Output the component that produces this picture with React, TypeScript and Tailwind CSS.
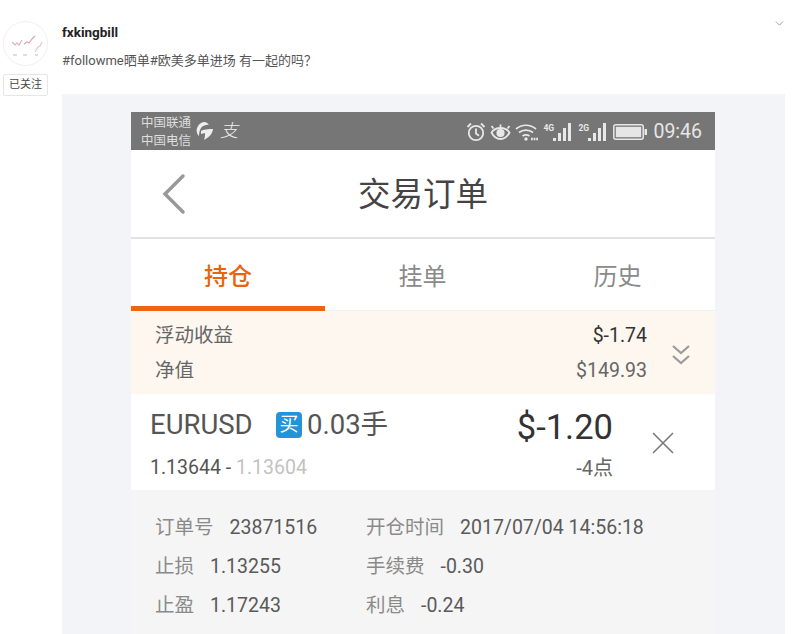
import { ChevronDown } from "lucide-react"

const FONT = "font-['Roboto','Noto_Sans_CJK_SC',sans-serif]"

function StatusIcons() {
  return (
    <div className="flex items-center gap-[4px]">
      {/* alarm */}
      <svg width="20" height="20" viewBox="0 0 20 20" fill="none" stroke="#e8e8e8" strokeWidth="1.800">
        <circle cx="10" cy="11" r="7.200" />
        <path d="M10 6.500v5l3 2.200M1.500 5l3.500-3.500M18.500 5 15 1.500" />
      </svg>
      {/* eye */}
      <svg width="21" height="20" viewBox="0 0 21 20" fill="none" stroke="#e8e8e8" strokeWidth="1.800">
        <path d="M1.500 10.500c2-3 5.200-4.500 9-4.500s7 1.500 9 4.500c-2 4-5.200 6.500-9 6.500s-7-2.500-9-6.500z" />
        <circle cx="10.500" cy="11" r="3.200" fill="#e8e8e8" />
        <path d="M3.500 6.500 1.500 4M17.500 6.500l2-2.500M10.500 5V2.500" />
      </svg>
      {/* wifi */}
      <svg width="24" height="20" viewBox="0 0 24 20" fill="none" stroke="#e8e8e8" strokeWidth="1.700">
        <path d="M1 7c5.800-5 14.200-5 20 0M4 10.500c4-3.200 10-3.200 14 0M7.500 14c2.200-1.500 4.800-1.500 7 0" />
        <circle cx="11" cy="17" r="1.700" fill="#e8e8e8" stroke="none" />
        <path d="M16 17h7" strokeWidth="2.500" strokeDasharray="1.800 0.800" />
      </svg>
      <Signal label="4G" />
      <Signal label="2G" />
      {/* battery */}
      <svg width="34" height="18" viewBox="0 0 34 18">
        <rect x="0.800" y="1.800" width="29.400" height="14.400" rx="2" fill="none" stroke="#e8e8e8" strokeWidth="1.500" />
        <rect x="2.800" y="3.800" width="25.400" height="10.400" fill="#e6e6e6" />
        <rect x="31.500" y="6" width="2.500" height="6" fill="#e8e8e8" />
      </svg>
    </div>
  )
}

function Signal({ label }: { label: string }) {
  return (
    <div className="relative w-[31px] h-[20px]">
      <span className="absolute left-0 top-[1px] text-[8.500px] font-bold leading-[10px] text-[#e8e8e8]">{label}</span>
      <svg width="31" height="20" viewBox="0 0 31 20" fill="#e8e8e8" className="absolute left-0 top-0">
        <rect x="10" y="16" width="3" height="3" />
        <rect x="15" y="11" width="3" height="8" />
        <rect x="20" y="6" width="3" height="13" />
        <rect x="25" y="1" width="3" height="18" />
      </svg>
    </div>
  )
}

function DetailRow({ a, b, c, d }: { a: string; b: string; c: string; d: string }) {
  return (
    <div className="flex h-[39px] items-center">
      <div className="w-[211px] flex gap-[16px]">
        <span className="text-[#8a8a8a]">{a}</span>
        <span className="text-[#5a5a5a]">{b}</span>
      </div>
      <div className="flex gap-[16px]">
        <span className="text-[#8a8a8a]">{c}</span>
        <span className="text-[#5a5a5a]">{d}</span>
      </div>
    </div>
  )
}

export default function App() {
  return (
    <div className={`flex h-[634px] w-[800px] overflow-hidden bg-white ${FONT}`}>
      {/* Avatar column */}
      <div className="w-[62px] shrink-0 pl-[3px] pt-[21px]">
        <div className="w-[45px] h-[45px] rounded-full border border-[#f0f0f0] bg-white flex items-center justify-center">
          <svg width="38" height="38" viewBox="0 0 38 38" fill="none" strokeWidth="1.200">
            <path d="M5 17l3 3 2-2 2 2 3-5" stroke="#dfb4ba" />
            <path d="M17 19l3-2 2 1 3-4 3-3" stroke="#dca6ae" />
            <path d="M28 27l3-5 2-1 2-4" stroke="#e8c4c4" />
            <path d="M6 30h4M16 30h4M28 30h3" stroke="#bdbdbd" />
          </svg>
        </div>
        <button className="mt-[8px] w-[45px] h-[22px] border border-[#e6e6e6] rounded-[2px] text-[11px] leading-[20px] text-[#444] bg-white">
          已关注
        </button>
      </div>

      {/* Post */}
      <div className="w-[723px] shrink-0 flex flex-col">
        <div className="h-[95px] relative pt-[24px]">
          <div className="text-[13.500px] leading-[16px] font-bold text-[#222]">fxkingbill</div>
          <div className="mt-[13px] text-[13px] leading-[16px] text-[#555]">#followme晒单#欧美多单进场 有一起的吗？</div>
          <ChevronDown className="absolute right-[-1px] top-[17px] text-[#777]" size={13} strokeWidth={1.300} />
        </div>

        <div className="flex-1 bg-[#f3f4f8] px-[69px] pt-[18px] pr-[70px]">
          <div className="w-[584px] bg-white">
            {/* Status bar */}
            <div className="h-[38px] bg-[#767676] flex items-center justify-between pl-[10px] pr-[13px]">
              <div className="flex items-center">
                <div className="pt-[2px] text-[12.500px] leading-[18px] text-[#dedede]">
                  <div>中国联通</div>
                  <div>中国电信</div>
                </div>
                <svg width="20" height="20" viewBox="0 0 20 20" className="ml-[4px]" fill="#eee">
                  <path d="M10 1a8.500 8.500 0 0 0-7 13l1 1c0-4 1-8 4-10 2-1 4-1.500 6-1.500A9 9 0 0 0 10 1zM6 10c2-1.500 7-2 12-2-.5 4-3 8-9 11 1-3 1-5 1-7l-4 1z" />
                </svg>
                <span className="ml-[5px] text-[18px] leading-none font-light italic text-[#eee]">支</span>
              </div>
              <div className="flex items-center gap-[6px] pt-[2px]">
                <StatusIcons />
                <span className="text-[19.500px] text-[#e6e6e6]">09:46</span>
              </div>
            </div>

            {/* Header */}
            <div className="h-[89px] border-b-2 border-[#e2e2e2] relative flex items-center justify-center pt-[4px]">
              <svg width="30" height="46" viewBox="0 0 30 46" fill="none" stroke="#999" strokeWidth="3.500" strokeLinecap="round" className="absolute left-[28px] top-[21px]">
                <path d="M24 5 6 23l18 18" />
              </svg>
              <span className="text-[32.500px] text-[#444]">交易订单</span>
            </div>

            {/* Tabs */}
            <div className="flex h-[72px] text-[24px]">
              <div className="w-[194px] flex items-center justify-center text-[#e8650f] font-medium border-b-[5px] border-[#ee6411] pt-[9px]">持仓</div>
              <div className="w-[195px] flex items-center justify-center text-[#8a8a8a] border-b border-[#efefef] pt-[4px]">挂单</div>
              <div className="w-[195px] flex items-center justify-center text-[#8a8a8a] border-b border-[#efefef] pt-[4px]">历史</div>
            </div>

            {/* Summary */}
            <div className="h-[83px] bg-[#fdf7f0] flex items-center pl-[24px] pr-[24px] text-[19.500px]">
              <div className="flex-1 flex flex-col gap-[6px] leading-[29px] text-[#666]">
                <div className="flex justify-between">
                  <span>浮动收益</span>
                  <span className="text-[#333]">$-1.74</span>
                </div>
                <div className="flex justify-between">
                  <span>净值</span>
                  <span className="text-[#666]">$149.93</span>
                </div>
              </div>
              <svg width="20" height="24" viewBox="0 0 20 24" fill="none" stroke="#9b9b9b" strokeWidth="2.200" className="ml-[24px] mt-[4px]">
                <path d="M2 3l8 7 8-7M2 13l8 7 8-7" />
              </svg>
            </div>

            {/* Order row */}
            <div className="h-[96px] flex">
              <div className="w-[369px] pl-[19px] pt-[12px]">
                <div className="flex items-center h-[38px]">
                  <span className="text-[27.500px] text-[#555] w-[126px]">EURUSD</span>
                  <span className="w-[26px] h-[26px] bg-[#2494d8] rounded-[4px] text-white text-[19px] leading-[26px] text-center">买</span>
                  <span className="ml-[5px] text-[27.500px] text-[#555]">0.03手</span>
                </div>
                <div className="mt-[12px] text-[19.500px] leading-[24px]">
                  <span className="text-[#555]">1.13644 - </span>
                  <span className="text-[#c2c2c2]">1.13604</span>
                </div>
              </div>
              <div className="w-[113px] flex flex-col items-end pt-[10px]">
                <span className="text-[34.500px] leading-[46px] text-[#333]">$-1.20</span>
                <span className="mt-[6px] text-[20px] leading-[24px] text-[#666]">-4点</span>
              </div>
              <div className="flex-1 flex items-start pl-[38px] pt-[37px]">
                <svg width="24" height="24" viewBox="0 0 24 24" fill="none" stroke="#7a7a7a" strokeWidth="1.600">
                  <path d="M2 2l20 20M22 2 2 22" />
                </svg>
              </div>
            </div>

            {/* Order detail */}
            <div className="h-[144px] bg-[#f5f5f5] pl-[24px] pt-[18px] text-[19.500px]">
              <DetailRow a="订单号" b="23871516" c="开仓时间" d="2017/07/04 14:56:18" />
              <DetailRow a="止损" b="1.13255" c="手续费" d="-0.30" />
              <DetailRow a="止盈" b="1.17243" c="利息" d="-0.24" />
            </div>
          </div>
        </div>
      </div>
      <div className="flex-1" />
    </div>
  )
}
